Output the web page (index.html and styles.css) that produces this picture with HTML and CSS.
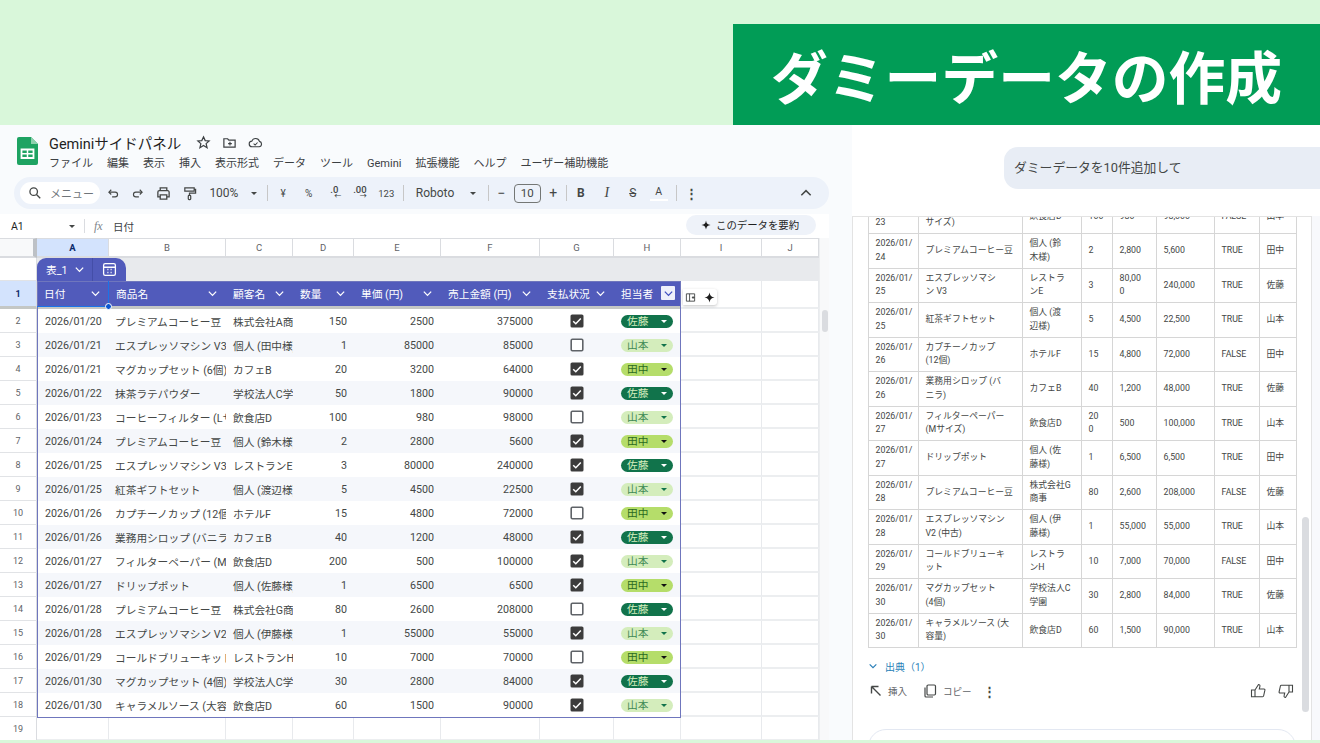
FILE: index.html
```html
<!DOCTYPE html>
<html lang="ja">
<head>
<meta charset="utf-8">
<title>ダミーデータの作成</title>
<link rel="stylesheet" href="styles.css">
</head>
<body>
<svg class="sprite" aria-hidden="true">
  <symbol id="chev" viewBox="0 0 12 12"><path d="M2 4l4 4 4-4" fill="none" stroke="currentColor" stroke-width="1.4"/></symbol>
  <symbol id="checked" viewBox="0 0 14 14"><rect x=".5" y=".5" width="13" height="13" rx="1.6" fill="#3c3c3c"/><path d="M3.2 7.2l2.6 2.5 5-5.2" fill="none" stroke="#fff" stroke-width="1.5"/></symbol>
  <symbol id="unchecked" viewBox="0 0 14 14"><rect x="1.2" y="1.2" width="11.6" height="11.6" rx="1.2" fill="#fff" stroke="#5f6368" stroke-width="1.6"/></symbol>
  <symbol id="spark" viewBox="0 0 12 12"><path d="M6 .5C6.5 4 8 5.5 11.5 6 8 6.5 6.5 8 6 11.5 5.5 8 4 6.500 .5 6 4 5.500 5.500 4 6 .5z" fill="currentColor"/></symbol>
</svg>

<header class="banner"><h1 class="headline">ダミーデータの作成</h1></header>

<main class="main">
  <section class="sheets">
    <div class="doc">
      <svg class="logo" viewBox="0 0 21 28"><path d="M2 0h12l7 7v19a2 2 0 0 1-2 2H2a2 2 0 0 1-2-2V2a2 2 0 0 1 2-2z" fill="#1ea362"/><path d="M14 0l7 7h-7z" fill="#8ed1ae"/><path d="M4.500 12.500h12v8.500h-12z" fill="none" stroke="#fff" stroke-width="1.800"/><path d="M4.500 16.700h12M10.500 12.500v8.500" stroke="#fff" stroke-width="1.500"/></svg>
      <div class="doc-body">
        <div class="doc-title">
          <span class="doc-name">Geminiサイドパネル</span>
          <svg class="ti" viewBox="0 0 16 16"><path d="M8 2l1.800 4 4.200.4-3.200 2.800 1 4.300L8 11.200 4.200 13.500l1-4.300L2 6.400 6.200 6z" fill="none" stroke="#3c4043" stroke-width="1.300"/></svg>
          <svg class="ti" viewBox="0 0 16 16"><path d="M2 4h4l1.300 1.500H14V13H2z" fill="none" stroke="#3c4043" stroke-width="1.300"/><path d="M8.500 7.200v4M6.500 9.200h4" stroke="#3c4043" stroke-width="1.200"/></svg>
          <svg class="ti" viewBox="0 0 16 16"><path d="M4.500 12.500a3 3 0 0 1-.4-6A4.300 4.300 0 0 1 12.200 6.800a2.900 2.900 0 0 1-.4 5.700z" fill="none" stroke="#3c4043" stroke-width="1.200"/><path d="M6 9.300l1.600 1.500 2.600-2.800" fill="none" stroke="#3c4043" stroke-width="1.100"/></svg>
        </div>
        <nav class="menu"><span>ファイル</span><span>編集</span><span>表示</span><span>挿入</span><span>表示形式</span><span>データ</span><span>ツール</span><span>Gemini</span><span>拡張機能</span><span>ヘルプ</span><span>ユーザー補助機能</span></nav>
      </div>
    </div>

    <div class="toolbar">
      <div class="search">
        <svg class="tbi" viewBox="0 0 16 16"><circle cx="6.500" cy="6.500" r="4.300" fill="none" stroke="#444746" stroke-width="1.500"/><path d="M9.700 9.700l4.300 4.300" stroke="#444746" stroke-width="1.500"/></svg>
        <span>メニュー</span>
      </div>
      <span class="tb"><svg class="tbi" viewBox="0 0 16 16"><path d="M3.500 7h7a2.700 2.700 0 0 1 0 5.400H7" fill="none" stroke="#444746" stroke-width="1.300"/><path d="M6 4.300L3.300 7 6 9.700" fill="none" stroke="#444746" stroke-width="1.300"/></svg></span>
      <span class="tb"><svg class="tbi" viewBox="0 0 16 16"><path d="M12.500 7h-7a2.700 2.700 0 0 0 0 5.400H9" fill="none" stroke="#444746" stroke-width="1.300"/><path d="M10 4.300L12.700 7 10 9.700" fill="none" stroke="#444746" stroke-width="1.300"/></svg></span>
      <span class="tb"><svg class="tbi big" viewBox="0 0 16 16"><path d="M4.500 5V2h7v3M4.500 11.500H2V6.500a1.500 1.500 0 0 1 1.500-1.500h9A1.500 1.500 0 0 1 14 6.500v5h-2.500" fill="none" stroke="#444746" stroke-width="1.400"/><path d="M4.500 9.500h7V14h-7z" fill="none" stroke="#444746" stroke-width="1.400"/></svg></span>
      <span class="tb"><svg class="tbi big" viewBox="0 0 16 16"><path d="M3 2h10v3.500H3zM13 3.700h1.500v3.800H8v2.500" fill="none" stroke="#444746" stroke-width="1.300"/><rect x="6.700" y="10" width="2.600" height="4.500" rx=".8" fill="none" stroke="#444746" stroke-width="1.300"/></svg></span>
      <span class="tb-text zoomv">100%<i class="caret"></i></span>
      <i class="sep"></i>
      <span class="tb sm first">¥</span><span class="tb sm">%</span>
      <span class="tb dec">.0<small>←</small></span><span class="tb dec">.00<small>→</small></span>
      <span class="tb sm num">123</span>
      <i class="sep s2"></i>
      <span class="tb-text fontv">Roboto<i class="caret"></i></span>
      <i class="sep"></i>
      <span class="tb wide">−</span><span class="sizebox">10</span><span class="tb wide">+</span>
      <i class="sep"></i>
      <span class="tb fmt f1"><b>B</b></span><span class="tb fmt"><em>I</em></span><span class="tb fmt"><s>S</s></span><span class="tb fmt tc">A</span>
      <i class="sep s3"></i>
      <span class="tb dots">⋮</span>
      <span class="collapse"><svg class="tbi" viewBox="0 0 12 12"><path d="M2 8l4-4 4 4" fill="none" stroke="#444746" stroke-width="1.300"/></svg></span>
    </div>

    <div class="formula">
      <span class="ref">A1</span><i class="caret"></i><i class="fsep"></i>
      <span class="fx">fx</span><span class="fval">日付</span>
      <span class="summary"><svg class="spark"><use href="#spark"/></svg>このデータを要約</span>
    </div>

    <div class="grid">
      <div class="corner"></div>
      <div class="col on">A</div><div class="col">B</div><div class="col">C</div><div class="col">D</div><div class="col">E</div><div class="col">F</div><div class="col">G</div><div class="col">H</div><div class="col">I</div><div class="col">J</div>

      <div class="vscroll"><i></i></div>

      <div class="rh"></div>
      <div class="band">
        <div class="tab">
          <span class="tab-name">表_1<svg class="cv"><use href="#chev"/></svg></span>
          <span class="tab-calc"><svg viewBox="0 0 14 14" class="calc"><rect x="1.500" y="1.500" width="11" height="11" rx="1.500" fill="none" stroke="#fff" stroke-width="1.200"/><path d="M1.500 4.800h11M5 7h1M8 7h1M5 9.800h1M8 9.800h1" stroke="#fff" stroke-width="1.400"/></svg></span>
        </div>
      </div>

      <div class="rh on hr">1</div>
      <div class="hc"><span>日付</span><svg class="cv"><use href="#chev"/></svg></div>
      <div class="hc"><span>商品名</span><svg class="cv"><use href="#chev"/></svg></div>
      <div class="hc"><span>顧客名</span><svg class="cv"><use href="#chev"/></svg></div>
      <div class="hc"><span>数量</span><svg class="cv"><use href="#chev"/></svg></div>
      <div class="hc"><span>単価 (円)</span><svg class="cv"><use href="#chev"/></svg></div>
      <div class="hc"><span>売上金額 (円)</span><svg class="cv"><use href="#chev"/></svg></div>
      <div class="hc"><span>支払状況</span><svg class="cv"><use href="#chev"/></svg></div>
      <div class="hc last"><span>担当者</span><span class="fbtn"><svg class="cv"><use href="#chev"/></svg></span></div>
      <div class="e hr"></div><div class="e hr"></div>

      <div class="r"><div class="rh">2</div><div class="c d">2026/01/20</div><div class="c p">プレミアムコーヒー豆</div><div class="c u">株式会社A商事</div><div class="c n">150</div><div class="c n">2500</div><div class="c n">375000</div><div class="c k"><svg class="box"><use href="#checked"/></svg></div><div class="c h"><span class="chip sato">佐藤</span></div><div class="e"></div><div class="e"></div></div>
      <div class="r alt"><div class="rh">3</div><div class="c d">2026/01/21</div><div class="c p">エスプレッソマシン V3</div><div class="c u">個人 (田中様)</div><div class="c n">1</div><div class="c n">85000</div><div class="c n">85000</div><div class="c k"><svg class="box"><use href="#unchecked"/></svg></div><div class="c h"><span class="chip yama">山本</span></div><div class="e"></div><div class="e"></div></div>
      <div class="r"><div class="rh">4</div><div class="c d">2026/01/21</div><div class="c p">マグカップセット (6個)</div><div class="c u">カフェB</div><div class="c n">20</div><div class="c n">3200</div><div class="c n">64000</div><div class="c k"><svg class="box"><use href="#checked"/></svg></div><div class="c h"><span class="chip tana">田中</span></div><div class="e"></div><div class="e"></div></div>
      <div class="r alt"><div class="rh">5</div><div class="c d">2026/01/22</div><div class="c p">抹茶ラテパウダー</div><div class="c u">学校法人C学園</div><div class="c n">50</div><div class="c n">1800</div><div class="c n">90000</div><div class="c k"><svg class="box"><use href="#checked"/></svg></div><div class="c h"><span class="chip sato">佐藤</span></div><div class="e"></div><div class="e"></div></div>
      <div class="r"><div class="rh">6</div><div class="c d">2026/01/23</div><div class="c p">コーヒーフィルター (Lサイズ)</div><div class="c u">飲食店D</div><div class="c n">100</div><div class="c n">980</div><div class="c n">98000</div><div class="c k"><svg class="box"><use href="#unchecked"/></svg></div><div class="c h"><span class="chip yama">山本</span></div><div class="e"></div><div class="e"></div></div>
      <div class="r alt"><div class="rh">7</div><div class="c d">2026/01/24</div><div class="c p">プレミアムコーヒー豆</div><div class="c u">個人 (鈴木様)</div><div class="c n">2</div><div class="c n">2800</div><div class="c n">5600</div><div class="c k"><svg class="box"><use href="#checked"/></svg></div><div class="c h"><span class="chip tana">田中</span></div><div class="e"></div><div class="e"></div></div>
      <div class="r"><div class="rh">8</div><div class="c d">2026/01/25</div><div class="c p">エスプレッソマシン V3</div><div class="c u">レストランE</div><div class="c n">3</div><div class="c n">80000</div><div class="c n">240000</div><div class="c k"><svg class="box"><use href="#checked"/></svg></div><div class="c h"><span class="chip sato">佐藤</span></div><div class="e"></div><div class="e"></div></div>
      <div class="r alt"><div class="rh">9</div><div class="c d">2026/01/25</div><div class="c p">紅茶ギフトセット</div><div class="c u">個人 (渡辺様)</div><div class="c n">5</div><div class="c n">4500</div><div class="c n">22500</div><div class="c k"><svg class="box"><use href="#checked"/></svg></div><div class="c h"><span class="chip yama">山本</span></div><div class="e"></div><div class="e"></div></div>
      <div class="r"><div class="rh">10</div><div class="c d">2026/01/26</div><div class="c p">カプチーノカップ (12個)</div><div class="c u">ホテルF</div><div class="c n">15</div><div class="c n">4800</div><div class="c n">72000</div><div class="c k"><svg class="box"><use href="#unchecked"/></svg></div><div class="c h"><span class="chip tana">田中</span></div><div class="e"></div><div class="e"></div></div>
      <div class="r alt"><div class="rh">11</div><div class="c d">2026/01/26</div><div class="c p">業務用シロップ (バニラ)</div><div class="c u">カフェB</div><div class="c n">40</div><div class="c n">1200</div><div class="c n">48000</div><div class="c k"><svg class="box"><use href="#checked"/></svg></div><div class="c h"><span class="chip sato">佐藤</span></div><div class="e"></div><div class="e"></div></div>
      <div class="r"><div class="rh">12</div><div class="c d">2026/01/27</div><div class="c p">フィルターペーパー (Mサイズ)</div><div class="c u">飲食店D</div><div class="c n">200</div><div class="c n">500</div><div class="c n">100000</div><div class="c k"><svg class="box"><use href="#checked"/></svg></div><div class="c h"><span class="chip yama">山本</span></div><div class="e"></div><div class="e"></div></div>
      <div class="r alt"><div class="rh">13</div><div class="c d">2026/01/27</div><div class="c p">ドリップポット</div><div class="c u">個人 (佐藤様)</div><div class="c n">1</div><div class="c n">6500</div><div class="c n">6500</div><div class="c k"><svg class="box"><use href="#checked"/></svg></div><div class="c h"><span class="chip tana">田中</span></div><div class="e"></div><div class="e"></div></div>
      <div class="r"><div class="rh">14</div><div class="c d">2026/01/28</div><div class="c p">プレミアムコーヒー豆</div><div class="c u">株式会社G商事</div><div class="c n">80</div><div class="c n">2600</div><div class="c n">208000</div><div class="c k"><svg class="box"><use href="#unchecked"/></svg></div><div class="c h"><span class="chip sato">佐藤</span></div><div class="e"></div><div class="e"></div></div>
      <div class="r alt"><div class="rh">15</div><div class="c d">2026/01/28</div><div class="c p">エスプレッソマシン V2 (中古)</div><div class="c u">個人 (伊藤様)</div><div class="c n">1</div><div class="c n">55000</div><div class="c n">55000</div><div class="c k"><svg class="box"><use href="#checked"/></svg></div><div class="c h"><span class="chip yama">山本</span></div><div class="e"></div><div class="e"></div></div>
      <div class="r"><div class="rh">16</div><div class="c d">2026/01/29</div><div class="c p">コールドブリューキット</div><div class="c u">レストランH</div><div class="c n">10</div><div class="c n">7000</div><div class="c n">70000</div><div class="c k"><svg class="box"><use href="#unchecked"/></svg></div><div class="c h"><span class="chip tana">田中</span></div><div class="e"></div><div class="e"></div></div>
      <div class="r alt"><div class="rh">17</div><div class="c d">2026/01/30</div><div class="c p">マグカップセット (4個)</div><div class="c u">学校法人C学園</div><div class="c n">30</div><div class="c n">2800</div><div class="c n">84000</div><div class="c k"><svg class="box"><use href="#checked"/></svg></div><div class="c h"><span class="chip sato">佐藤</span></div><div class="e"></div><div class="e"></div></div>
      <div class="r"><div class="rh">18</div><div class="c d">2026/01/30</div><div class="c p">キャラメルソース (大容量)</div><div class="c u">飲食店D</div><div class="c n">60</div><div class="c n">1500</div><div class="c n">90000</div><div class="c k"><svg class="box"><use href="#checked"/></svg></div><div class="c h"><span class="chip yama">山本</span></div><div class="e"></div><div class="e"></div></div>
      <div class="r"><div class="rh">19</div><div class="e"></div><div class="e"></div><div class="e"></div><div class="e"></div><div class="e"></div><div class="e"></div><div class="e"></div><div class="e"></div><div class="e"></div><div class="e"></div></div>

      <div class="frame"></div>
      <div class="sel"><i></i></div>
      <div class="floater">
        <svg viewBox="0 0 12 12"><path d="M1.500 2h9v8h-9zM5 2v8M10.500 6h-3M8.800 4.500V7.500" fill="none" stroke="#444746" stroke-width="1"/></svg>
        <svg class="spark"><use href="#spark"/></svg>
      </div>
    </div>
  </section>

  <section class="panel">
    <div class="ask"><p class="bubble">ダミーデータを10件追加して</p></div>
    <div class="chatrow">
      <div class="chat">
        <table class="result">
          <colgroup><col class="w1"><col class="w2"><col class="w3"><col class="w4"><col class="w5"><col class="w6"><col class="w7"><col class="w8"></colgroup>
          <tbody>
            <tr><td>2026/01/<br>23</td><td>コーヒーフィルター (L<br>サイズ)</td><td>飲食店D</td><td>100</td><td>980</td><td>98,000</td><td>FALSE</td><td>山本</td></tr>
            <tr><td>2026/01/<br>24</td><td>プレミアムコーヒー豆</td><td>個人 (鈴<br>木様)</td><td>2</td><td>2,800</td><td>5,600</td><td>TRUE</td><td>田中</td></tr>
            <tr><td>2026/01/<br>25</td><td>エスプレッソマシ<br>ン V3</td><td>レストラ<br>ンE</td><td>3</td><td>80,00<br>0</td><td>240,000</td><td>TRUE</td><td>佐藤</td></tr>
            <tr><td>2026/01/<br>25</td><td>紅茶ギフトセット</td><td>個人 (渡<br>辺様)</td><td>5</td><td>4,500</td><td>22,500</td><td>TRUE</td><td>山本</td></tr>
            <tr><td>2026/01/<br>26</td><td>カプチーノカップ<br>(12個)</td><td>ホテルF</td><td>15</td><td>4,800</td><td>72,000</td><td>FALSE</td><td>田中</td></tr>
            <tr><td>2026/01/<br>26</td><td>業務用シロップ (バ<br>ニラ)</td><td>カフェB</td><td>40</td><td>1,200</td><td>48,000</td><td>TRUE</td><td>佐藤</td></tr>
            <tr><td>2026/01/<br>27</td><td>フィルターペーパー<br>(Mサイズ)</td><td>飲食店D</td><td>20<br>0</td><td>500</td><td>100,000</td><td>TRUE</td><td>山本</td></tr>
            <tr><td>2026/01/<br>27</td><td>ドリップポット</td><td>個人 (佐<br>藤様)</td><td>1</td><td>6,500</td><td>6,500</td><td>TRUE</td><td>田中</td></tr>
            <tr><td>2026/01/<br>28</td><td>プレミアムコーヒー豆</td><td>株式会社G<br>商事</td><td>80</td><td>2,600</td><td>208,000</td><td>FALSE</td><td>佐藤</td></tr>
            <tr><td>2026/01/<br>28</td><td>エスプレッソマシン<br>V2 (中古)</td><td>個人 (伊<br>藤様)</td><td>1</td><td>55,000</td><td>55,000</td><td>TRUE</td><td>山本</td></tr>
            <tr><td>2026/01/<br>29</td><td>コールドブリューキ<br>ット</td><td>レストラ<br>ンH</td><td>10</td><td>7,000</td><td>70,000</td><td>FALSE</td><td>田中</td></tr>
            <tr><td>2026/01/<br>30</td><td>マグカップセット<br>(4個)</td><td>学校法人C<br>学園</td><td>30</td><td>2,800</td><td>84,000</td><td>TRUE</td><td>佐藤</td></tr>
            <tr><td>2026/01/<br>30</td><td>キャラメルソース (大<br>容量)</td><td>飲食店D</td><td>60</td><td>1,500</td><td>90,000</td><td>TRUE</td><td>山本</td></tr>
          </tbody>
        </table>
        <div class="source"><svg class="cv"><use href="#chev"/></svg><span>出典（1）</span></div>
        <div class="actions">
          <svg class="ai" viewBox="0 0 14 14"><path d="M2.500 2.500h7M2.500 2.500v7M2.500 2.500l9 9" fill="none" stroke="#444746" stroke-width="1.400"/></svg>
          <span class="alabel ins">挿入</span>
          <svg class="ai" viewBox="0 0 14 14"><rect x="4" y="1" width="8.500" height="10" rx="1.200" fill="none" stroke="#444746" stroke-width="1.200"/><path d="M2 3.500V12a1 1 0 0 0 1 1h7" fill="none" stroke="#444746" stroke-width="1.200"/></svg>
          <span class="alabel cop">コピー</span>
          <span class="adots">⋮</span>
          <span class="thumbs">
            <svg class="ai" viewBox="0 0 16 16"><path d="M5 7L8.500 1.500c1 0 1.700.8 1.400 1.800L9.300 6H14c.7 0 1 .6.900 1.200l-1.300 5.800c-.1.500-.5.700-1 .7H5zM1.500 7H5v6.700H1.500z" fill="none" stroke="#444746" stroke-width="1.100"/></svg>
            <svg class="ai" viewBox="0 0 16 16"><path d="M11 9l-3.500 5.500c-1 0-1.700-.8-1.400-1.800L6.700 10H2c-.7 0-1-.6-.9-1.200l1.300-5.800c.1-.5.500-.7 1-.7H11zM14.500 9H11V2.300h3.500z" fill="none" stroke="#444746" stroke-width="1.100"/></svg>
          </span>
        </div>
        <div class="inputbox"></div>
        <div class="pscroll"></div>
      </div>
      <div class="strip"></div>
    </div>
  </section>
</main>
<div class="footbar"></div>
</body>
</html>
```

FILE: styles.css
```css
* { box-sizing: border-box; }
html, body { margin: 0; height: 743px; overflow: hidden; }
body {
  width: 1320px;
  display: flex;
  flex-direction: column;
  background: #fff;
  color: #3c4043;
  font-family: Roboto, "Noto Sans CJK JP", sans-serif;
  font-size: 10.7px;
}
.sprite { width: 0; height: 0; position: absolute; }

/* banner */
.banner {
  height: 125px;
  flex: none;
  display: flex;
  justify-content: flex-end;
  align-items: flex-end;
  background: #d9f7da;
}
.headline {
  margin: 0;
  width: 587px;
  height: 101px;
  padding-left: 38px;
  display: flex;
  align-items: center;
  background: #019c56;
  color: #fff;
  font: 700 56.800px/1 "Noto Sans CJK JP", sans-serif;
  white-space: nowrap;
}

.main { flex: 1; display: flex; min-height: 0; }
.footbar { height: 3px; flex: none; background: #d9f7da; }

/* sheets */
.sheets {
  width: 852px;
  flex: none;
  display: flex;
  flex-direction: column;
  background: #f9fbfd;
  overflow: hidden;
}
.doc { height: 52px; flex: none; display: flex; padding: 12px 0 0 17px; }
.logo { width: 21px; height: 28px; flex: none; }
.doc-body { margin-left: 11px; margin-top: -5px; }
.doc-title { display: flex; align-items: center; height: 20px; color: #1f1f1f; }
.doc-name { font-size: 14.500px; width: 132px; white-space: nowrap; color: #1f1f1f; }
.ti { width: 15px; height: 15px; flex: none; margin-left: 11px; }
.doc-name + .ti { margin-left: 15px; }
.menu { display: flex; gap: 14px; margin-top: 3px; font-size: 11px; line-height: 17px; color: #3c4043; white-space: nowrap; }

.toolbar {
  margin-left: 14px;
  width: 815px;
  height: 32px;
  flex: none;
  display: flex;
  align-items: center;
  padding: 0 16px 0 6px;
  border-radius: 16px;
  background: #edf2fa;
  color: #444746;
}
.search {
  width: 80px;
  height: 22px;
  flex: none;
  display: flex;
  align-items: center;
  gap: 8px;
  padding-left: 8px;
  border-radius: 11px;
  background: #fff;
  color: #70757a;
  font-size: 11px;
}
.tbi { width: 14px; height: 14px; flex: none; }
.tbi.big { width: 15px; height: 15px; }
.tb { width: 25.600px; flex: none; height: 22px; display: flex; align-items: center; justify-content: center; white-space: nowrap; }
.tb-text { display: flex; align-items: center; flex: none; white-space: nowrap; font-size: 12px; }
.zoomv { width: 65px; padding-left: 7px; }
.zoomv .caret { margin-left: 13px; }
.caret { display: inline-block; width: 0; height: 0; flex: none; border-left: 3px solid transparent; border-right: 3px solid transparent; border-top: 3.500px solid #444746; }
.sep { width: 1px; height: 16px; flex: none; background: #c7c7c7; }
.s2 { margin-left: 3px; }
.s3 { margin-left: 4px; }
.first { margin-left: 2px; }
.sm { font-size: 10px; }
.num { font-size: 9.500px; width: 27px; }
.dec { font-size: 9.500px; font-weight: 500; position: relative; align-items: flex-start; padding-top: 2px; }
.dec small { position: absolute; font-size: 7px; top: 10px; right: 6px; line-height: 8px; }
.fontv { width: 84px; padding-left: 12px; }
.fontv .caret { margin-left: 16px; }
.wide { width: 25px; font-size: 14px; }
.sizebox { width: 27px; height: 19px; flex: none; display: flex; align-items: center; justify-content: center; border: 1px solid #747775; border-radius: 4px; font-size: 11.500px; }
.fmt { width: 26px; font-size: 12px; }
.f1 { margin-left: 1px; }
.fmt em { font-family: "Liberation Serif", serif; font-size: 14px; }
.fmt s { font-weight: 400; }
.tc { font-size: 10.500px; position: relative; padding-bottom: 3px; }
.tc::after { content: ""; position: absolute; left: 4px; right: 4px; bottom: 3px; height: 2px; background: #fff; }
.dots { font-size: 13px; font-weight: 700; width: 30px; }
.collapse { margin-left: auto; display: flex; }

.formula {
  height: 24px;
  width: 829px;
  margin-top: 5px;
  flex: none;
  display: flex;
  align-items: center;
  padding-left: 11px;
  background: #fff;
  font-size: 10.500px;
}
.ref { width: 58px; color: #1f1f1f; }
.fsep { width: 1px; height: 14px; background: #dadce0; margin-left: 9px; }
.fx { font: italic 12px "Liberation Serif", serif; color: #80868b; margin-left: 9px; width: 19px; }
.fval { color: #3c4043; }
.summary {
  margin-left: auto;
  margin-right: 13px;
  margin-top: -3px;
  width: 130px;
  height: 20px;
  display: flex;
  align-items: center;
  gap: 5px;
  padding-left: 15px;
  border-radius: 10px;
  background: #eef2f9;
  font-size: 10.400px;
  color: #1f1f1f;
  white-space: nowrap;
}
.spark { width: 10px; height: 10px; color: #1f1f1f; flex: none; }

/* grid */
.grid {
  position: relative;
  flex: 1;
  width: 829px;
  display: grid;
  grid-template-columns: 37px 72px 117px 67px 61px 87px 99px 74px 67px 81px 57px 10px;
  grid-template-rows: 20px 23px 28px repeat(18, 24px);
  background: #fff;
  overflow: hidden;
}
.corner { background: #f8f9fa; border-right: 4px solid #bdc1c6; border-bottom: 2px solid #dadce0; border-top: 1px solid #dadce0; }
.col {
  display: flex;
  align-items: center;
  justify-content: center;
  background: #fff;
  border-top: 1px solid #dadce0;
  border-right: 1px solid #dadce0;
  border-bottom: 2px solid #dadce0;
  font-size: 9.500px;
  color: #5f6368;
}
.col.on { background: #d3e3fd; color: #0b2a6b; font-weight: 700; }
.vscroll { grid-column: 12; grid-row: 1 / -1; background: #f8f9fa; padding: 72px 2px 0; border-left: 1px solid #eceef0; }
.vscroll i { display: block; width: 6px; height: 22px; border-radius: 3px; background: #dadce0; }
.rh {
  display: flex;
  align-items: center;
  justify-content: center;
  background: #fff;
  border-bottom: 1px solid #e1e3e6;
  border-right: 1px solid #dadce0;
  font-size: 9px;
  color: #5f6368;
}
.rh.on { background: #d3e3fd; color: #0b2a6b; font-weight: 700; }
.band { grid-column: 2 / 12; background: #e8eaed; }
.tab { display: flex; width: 89px; height: 23px; border-radius: 9px 10px 0 0; background: #515bbb; color: #fff; font-size: 10.700px; }
.tab-name { width: 56px; display: flex; align-items: center; padding-left: 9px; border-right: 1px solid #444ea8; gap: 6px; white-space: nowrap; }
.tab-calc { flex: 1; display: flex; align-items: center; justify-content: center; }
.calc { width: 15px; height: 15px; }
.cv { width: 11px; height: 11px; flex: none; color: inherit; }
.hc {
  display: flex;
  align-items: center;
  justify-content: space-between;
  padding: 0 8px 1px 7px;
  background: #515bbb;
  border-bottom: 3px solid #c4c7c5;
  color: #fff;
  white-space: nowrap;
  overflow: hidden;
}
.hc.last { padding-right: 6px; }
.fbtn { width: 14px; height: 14px; display: flex; align-items: center; justify-content: center; background: #eef0fb; color: #3f4ec0; border-radius: 1px; }
.hr { border-bottom: 3px solid #c4c7c5; }
.r { display: contents; }
.c { display: flex; align-items: center; min-width: 0; background: #fff; white-space: nowrap; overflow: hidden; color: #444746; }
.alt > .c { background: #f5f7fb; }
.d { padding-left: 8px; }
.p { padding-left: 6px; }
.u { padding-left: 7px; }
.n { justify-content: flex-end; padding-right: 7px; }
.k { justify-content: center; padding-right: 1px; }
.h { padding-left: 7px; }
.e { border-right: 1px solid #e8eaed; border-bottom: 2px solid #eceef0; background: #fff; }
.box { width: 14px; height: 14px; flex: none; }
.chip {
  width: 52px;
  height: 13px;
  flex: none;
  display: flex;
  align-items: center;
  padding-left: 6px;
  border-radius: 7px;
  line-height: 13px;
  position: relative;
}
.chip::after {
  content: "";
  position: absolute;
  right: 6px;
  top: 5px;
  border-left: 3.500px solid transparent;
  border-right: 3.500px solid transparent;
  border-top: 3.500px solid currentColor;
}
.sato { background: #11734b; color: #d4edbc; }
.sato::after { border-top-color: #fff; }
.yama { background: #d4edbc; color: #3f8a55; }
.yama::after { border-top-color: #11734b; }
.tana { background: #b5dd6a; color: #2a6a1f; }
.tana::after { border-top-color: #111; }
.frame { position: absolute; inset: 0 0 -1px 0; grid-column: 2 / 10; grid-row: 3 / 21; border: 1.500px solid #6f76bd; pointer-events: none; z-index: 1; }
.sel { position: absolute; inset: 0 0 2px 0; grid-column: 2 / 3; grid-row: 3 / 4; border-right: 1.500px solid #1a73e8; border-bottom: 1.500px solid #1a73e8; z-index: 2; pointer-events: none; }
.sel i { position: absolute; right: -4px; bottom: -4px; width: 7px; height: 7px; border-radius: 50%; background: #0b57d0; border: 1px solid #fff; }
.floater {
  position: absolute;
  left: 683px;
  top: 51px;
  width: 34px;
  height: 16px;
  display: flex;
  align-items: center;
  gap: 8px;
  padding-left: 2px;
  background: #fff;
  box-shadow: 0 1px 3px rgba(60,64,67,.3);
  border-radius: 0 3px 3px 0;
  z-index: 3;
}
.floater svg { width: 11px; height: 11px; }

/* panel */
.panel { flex: 1; min-width: 0; display: flex; flex-direction: column; background: #fff; }
.ask { height: 91px; flex: none; display: flex; justify-content: flex-end; padding-top: 22px; }
.bubble {
  margin: 0;
  width: 316px;
  height: 42px;
  padding: 0 0 3px 10px;
  display: flex;
  align-items: center;
  border-radius: 14px 0 0 14px;
  background: #e8edf5;
  color: #444746;
  font-size: 12.800px;
}
.chatrow { flex: 1; display: flex; min-height: 0; }
.chat {
  position: relative;
  width: 460px;
  flex: none;
  overflow: hidden;
  border-top: 1px solid #e3e3e3;
  border-left: 1px solid #e3e3e3;
  border-right: 1px solid #e3e3e3;
  padding-left: 15px;
}
.strip { flex: 1; background: #f8f9fc; }
.result {
  margin-top: -18.500px;
  width: 428px;
  table-layout: fixed;
  border-collapse: collapse;
  font-size: 8.800px;
  line-height: 13.500px;
  color: #444746;
}
.result td { height: 34.500px; padding: 0 0 0 6.500px; border: 1px solid #d6d6d6; white-space: nowrap; overflow: hidden; vertical-align: middle; }
.w1 { width: 50px; } .w2 { width: 104px; } .w3 { width: 59px; } .w4 { width: 31px; }
.w5 { width: 44px; } .w6 { width: 58px; } .w7 { width: 45px; } .w8 { width: 37px; }
.source { height: 14px; margin-top: 11px; display: flex; align-items: center; gap: 7px; color: #2a7fb8; font-size: 10px; }
.source .cv { width: 10px; height: 10px; }
.actions { height: 16px; margin-top: 10px; display: flex; align-items: center; padding-left: 1px; color: #5f6368; font-size: 9.500px; width: 428px; }
.ai { width: 14px; height: 14px; flex: none; }
.alabel { white-space: nowrap; }
.ins { margin-left: 5px; width: 20px; margin-right: 15px; }
.cop { margin-left: 6px; width: 28px; }
.adots { margin-left: 12px; font-size: 13px; font-weight: 700; color: #444746; }
.thumbs { margin-left: auto; display: flex; gap: 12px; margin-right: 2px; }
.thumbs .ai { width: 16px; height: 16px; }
.inputbox { margin-top: 30px; width: 428px; height: 40px; border: 1px solid #e3e8f2; border-radius: 18px; }
.pscroll { position: absolute; left: 449px; top: 300px; width: 7px; height: 195px; border-radius: 4px; background: #dadce0; }
```
